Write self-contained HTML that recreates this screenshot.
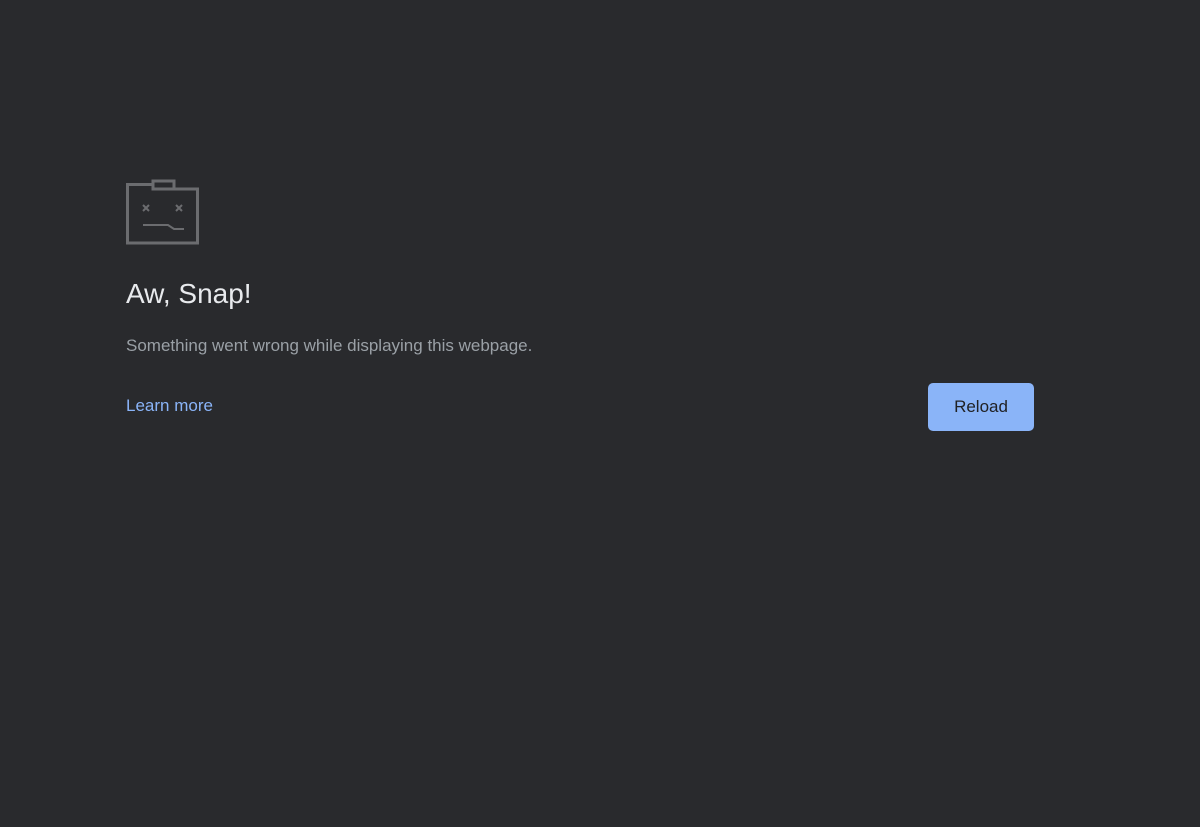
<!DOCTYPE html>
<html><head><meta charset="utf-8"><style>
html,body{margin:0;padding:0;width:1200px;height:827px;background:#292a2d;overflow:hidden;font-family:"Liberation Sans",sans-serif}
svg{position:absolute;left:124px;top:177px}
h1{position:absolute;left:126px;top:278px;margin:0;font-size:28px;font-weight:normal;color:#e8eaed}
.p{position:absolute;left:126px;top:336px;font-size:17px;color:#9aa0a6}
.l{position:absolute;left:126px;top:396px;font-size:17px;color:#8ab4f8}
.b{position:absolute;left:928px;top:383px;width:106px;height:48px;border-radius:5px;background:#8ab4f8;color:#202124;font-size:17px;line-height:48px;text-align:center}
</style></head><body>
<svg width="80" height="68" viewBox="0 0 80 68" fill="none" stroke="#6b6c6f" stroke-width="3">
<path d="M3.5 66V7.5H29V4H50V12H73.5V66Z"/>
<path d="M29 7.5V12H50"/>
<path d="M19 28l6 6M25 28l-6 6M52 28l6 6M58 28l-6 6" stroke-width="2"/>
<path d="M19 48H44L50 52H60" stroke-width="2"/>
</svg>
<h1>Aw, Snap!</h1>
<div class="p">Something went wrong while displaying this webpage.</div>
<div class="l">Learn more</div>
<div class="b">Reload</div>
</body></html>
